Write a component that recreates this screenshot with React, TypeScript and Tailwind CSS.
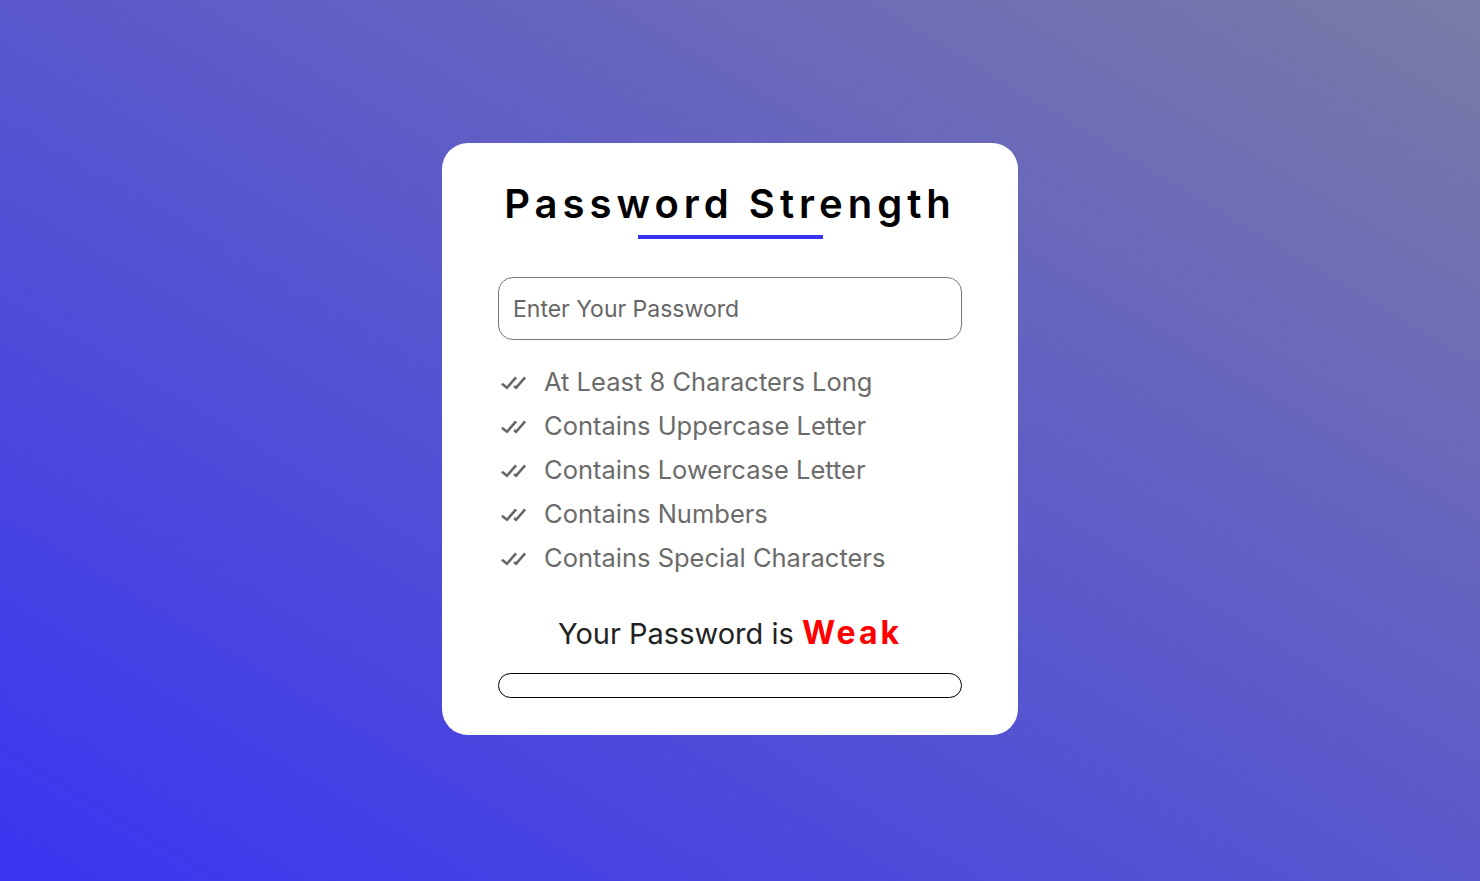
import { BiCheckDouble } from 'react-icons/bi';

const rules = [
  'At Least 8 Characters Long',
  'Contains Uppercase Letter',
  'Contains Lowercase Letter',
  'Contains Numbers',
  'Contains Special Characters',
];

export default function App() {
  return (
    <div className="min-h-screen w-full flex items-center justify-center pr-[20px] pb-[3px] bg-[linear-gradient(to_top_right,#3935f2,#7b7ba6)] font-['Inter',sans-serif]">
      <div className="w-[576px] h-[592px] bg-white rounded-[26px] px-[56px] pt-[37px] flex flex-col">
        <h1 className="text-center text-[40px] leading-[48px] font-semibold tracking-[5px] text-black">
          Password Strength
        </h1>
        <div className="mx-auto mt-[7px] w-[185px] h-[4px] bg-[#3535f0]" />

        <input
          type="password"
          placeholder="Enter Your Password"
          className="mt-[38px] h-[63px] w-full rounded-[15px] border border-[#777] px-[14px] text-[23px] text-[#333] placeholder:text-[#666] outline-none"
        />

        <ul className="mt-[20px] flex flex-col">
          {rules.map((r) => (
            <li key={r} className="flex items-center h-[44px] text-[25.5px] text-[#6b6b6b]">
              <BiCheckDouble className="w-[31px] h-[31px] mr-[15px] text-[#666]" />
              <span>{r}</span>
            </li>
          ))}
        </ul>

        <p className="mt-[29px] text-center text-[29px] text-[#222]">
          Your Password is{' '}
          <span className="text-[32px] font-bold tracking-[3px] text-[#ff0000]">Weak</span>
        </p>

        <div className="mt-[16px] h-[25px] w-full rounded-full border-[1.5px] border-black" />
      </div>
    </div>
  );
}
